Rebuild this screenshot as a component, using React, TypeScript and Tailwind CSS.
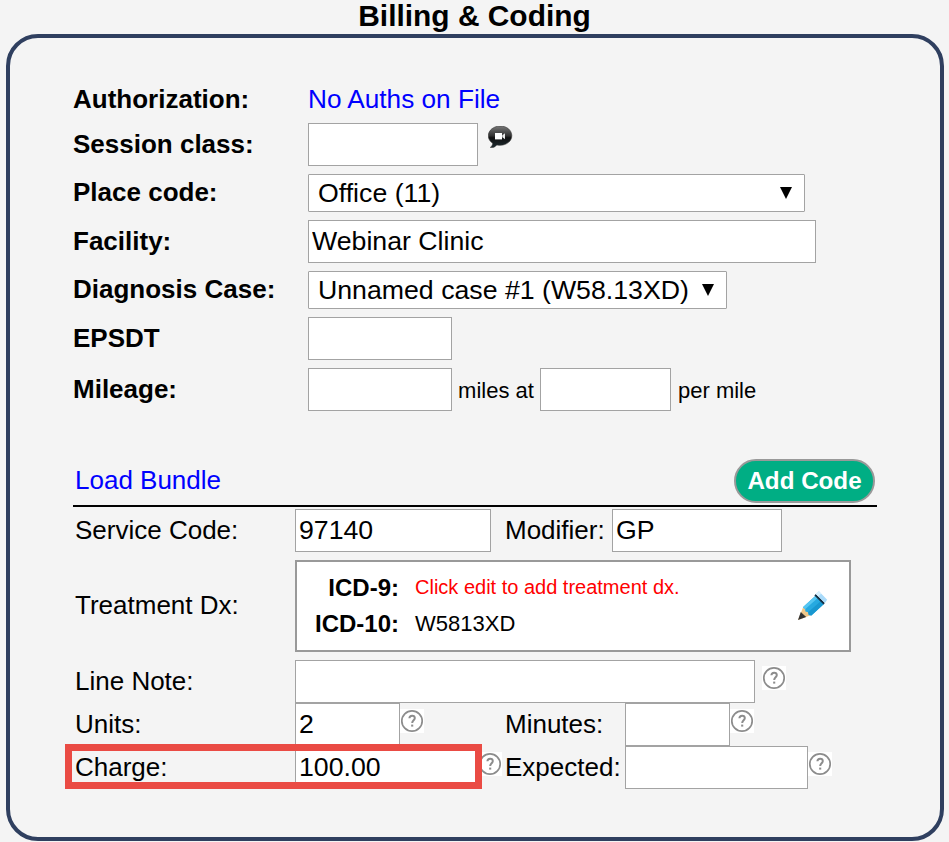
import type { ReactNode } from 'react';

interface FieldProps {
  label: string;
  className?: string;
  children: ReactNode;
}

function Field({ label, className = '', children }: FieldProps) {
  return (
    <div className={`flex items-center ${className}`}>
      <div className="w-[235px] shrink-0 pb-[2px] text-[26px] leading-none font-bold whitespace-nowrap">{label}</div>
      {children}
    </div>
  );
}

function TextBox({ label, value = '', className }: { label: string; value?: string; className: string }) {
  return (
    <input
      type="text"
      aria-label={label}
      defaultValue={value}
      className={`block h-[43px] shrink-0 border border-[#a3a3a3] bg-white px-[3px] pb-px text-[26.7px] leading-none outline-none ${className}`}
    />
  );
}

function SelectBox({ value, className }: { value: string; className: string }) {
  return (
    <button
      type="button"
      className={`flex h-[38px] items-center justify-between rounded-[1px] border border-[#a3a3a3] bg-white pr-3 pl-[9px] text-[26.7px] leading-none whitespace-nowrap ${className}`}
    >
      <span className="pt-px">{value}</span>
      <svg className="mb-px h-3 w-3" viewBox="0 0 12 12">
        <path d="M0 0h12L6 12z" />
      </svg>
    </button>
  );
}

function HelpIcon({ className = '' }: { className?: string }) {
  return (
    <svg className={`h-6 w-6 shrink-0 bg-white ${className}`} viewBox="0 0 24 24" fill="none" stroke="#8c8c8c">
      <circle cx="12" cy="12" r="10.2" strokeWidth="1.7" />
      <path d="M9.4 9.300c.1-1.700 1.200-2.600 2.700-2.600 1.600 0 2.700 1 2.700 2.400 0 2.200-2.600 2.300-2.600 5" strokeWidth="2" />
      <path d="M12.200 15.600v2" strokeWidth="2.100" />
    </svg>
  );
}

function VideoBubble() {
  return (
    <svg className="mb-[15px] ml-[10px] h-[23px] w-[25px]" viewBox="0 0 25 23">
      <defs>
        <linearGradient id="bubble" x1="0" y1="0" x2="0" y2="1">
          <stop offset="0" stopColor="#777" />
          <stop offset="0.450" stopColor="#333" />
          <stop offset="0.550" stopColor="#111" />
          <stop offset="1" stopColor="#1c2a30" />
        </linearGradient>
      </defs>
      <path
        d="M12.300 0C5.800 0 .300 4.300 .300 9.700c0 3.200 1.700 5.900 4.400 7.500-.1 1.700-.8 3-2.400 4.200 3 .4 5-.6 6.500-2.500 1 .3 2.100.4 3.200.4 6.500 0 11.800-4.200 11.800-9.600S18.800 0 12.300 0z"
        fill="url(#bubble)"
        stroke="#333"
        strokeWidth="0.600"
      />
      <path d="M7 7h7v6.400H7z" fill="#fff" />
      <path d="M14.300 9.200l2.700-2v6l-2.700-2z" fill="#e8e8e8" />
    </svg>
  );
}

function PencilIcon() {
  return (
    <svg className="h-[30px] w-[30px]" viewBox="0 0 30 30">
      <path d="M0 29L5.200 16l8 8z" fill="#f0c88a" />
      <path d="M0 29l2.800-8 5.400 4.900z" fill="#333" />
      <path d="M4.900 16.200L17.500 4.800l8.400 8.300-12.500 11.300-2.600-.5-.7-2.600-2.700-.7-.3-2.600z" fill="#26a9e0" />
      <path d="M4.900 16.200L17.500 4.800l2.300 2.300L7.100 18.300z" fill="#55c6f2" />
      <path d="M10.100 21.300L22.900 10.100l3 3-12.500 11.300-2.600-.5z" fill="#1897d0" />
      <path d="M16.400 4.400l1.500-1.400 9 9-1.400 1.500z" fill="#163044" />
      <path d="M17.900 3L20.900.300l8.300 8.400-2.300 3.300z" fill="#a9dbfb" />
      <path d="M17.900 3L20.900.300l2.300 2.300-2.800 2.900z" fill="#d9f0fd" />
    </svg>
  );
}

export default function App() {
  return (
    <div className="h-[842px] w-[949px] overflow-hidden bg-[#f4f4f4] font-['Liberation_Sans',Arial,sans-serif] text-black">
      <h1 className="h-[34px] pt-[2px] text-center text-[29.9px] leading-[28px] font-bold">Billing &amp; Coding</h1>

      <div className="ml-[6px] h-[807px] w-[938px] rounded-[32px] border-4 border-[#2f3f5f] pt-9 pl-[63px]">
        <Field label="Authorization:" className="h-[49px] pt-[2px]">
          <a href="#" className="pb-px text-[26.2px] leading-none text-[#0000ff]">No Auths on File</a>
        </Field>

        <div className="flex flex-col gap-2">
          <Field label="Session class:" className="h-[43px]">
            <TextBox label="Session class" className="w-[170px]" />
            <VideoBubble />
          </Field>
          <Field label="Place code:">
            <SelectBox value="Office (11)" className="w-[497px]" />
          </Field>
          <Field label="Facility:">
            <TextBox label="Facility" value="Webinar Clinic" className="w-[508px]" />
          </Field>
          <Field label="Diagnosis Case:">
            <SelectBox value="Unnamed case #1 (W58.13XD)" className="w-[419px]" />
          </Field>
          <Field label="EPSDT">
            <TextBox label="EPSDT" className="w-[144px]" />
          </Field>
          <Field label="Mileage:">
            <TextBox label="Miles" className="w-[144px]" />
            <span className="w-[88px] pt-[2px] text-center text-[22px] leading-none">miles at</span>
            <TextBox label="Rate" className="w-[131px]" />
            <span className="ml-[7px] pt-[2px] text-[22px] leading-none">per mile</span>
          </Field>
        </div>

        <div className="mt-12 flex h-12 w-[804px] items-start justify-between border-b-2 border-black pr-[2px] pl-[2px]">
          <a href="#" className="pt-2 text-[26px] leading-none text-[#0000ff]">Load Bundle</a>
          <button
            type="button"
            className="h-11 w-[141px] rounded-full border-2 border-[#999] bg-[#00ae84] text-[24.2px] leading-none font-bold whitespace-nowrap text-white"
          >
            Add Code
          </button>
        </div>

        <div className="mt-[2px] flex h-[43px] items-center pl-[2px] text-[26px] leading-none">
          <span className="w-[220px] pb-px">Service Code:</span>
          <TextBox label="Service code" value="97140" className="w-[196px]" />
          <span className="w-[121px] pb-px pl-[14px]">Modifier:</span>
          <TextBox label="Modifier" value="GP" className="w-[170px]" />
        </div>

        <div className="mt-2 flex h-[92px] items-center pl-[2px] text-[26px] leading-none">
          <span className="w-[220px] pb-[2px]">Treatment Dx:</span>
          <div className="flex h-full w-[556px] items-center justify-between border-2 border-[#999] bg-white pr-[21px]">
            <dl className="grid grid-cols-[102px_auto] gap-x-4 leading-9">
              <dt className="text-right text-[24px] font-bold">ICD-9:</dt>
              <dd className="text-[20px] leading-[34px] text-[#ff0000]">Click edit to add treatment dx.</dd>
              <dt className="text-right text-[24px] font-bold">ICD-10:</dt>
              <dd className="text-[22px]">W5813XD</dd>
            </dl>
            <PencilIcon />
          </div>
        </div>

        <div className="mt-2 flex h-[43px] items-center pl-[2px] text-[26px] leading-none">
          <span className="w-[220px] pb-[2px]">Line Note:</span>
          <TextBox label="Line note" className="w-[460px]" />
          <HelpIcon className="mb-[7px] ml-[7px]" />
        </div>

        <div className="flex h-[43px] items-center pl-[2px] text-[26px] leading-none">
          <span className="w-[220px] pb-[2px]">Units:</span>
          <TextBox label="Units" value="2" className="w-[105px]" />
          <HelpIcon className="mb-[7px]" />
          <span className="ml-[81px] w-[120px] pb-[2px]">Minutes:</span>
          <TextBox label="Minutes" className="w-[105px]" />
          <HelpIcon className="mb-[7px]" />
        </div>

        <div className="relative flex h-[43px] items-center pl-[2px] text-[26px] leading-none">
          <span className="w-[220px] pb-[2px]">Charge:</span>
          <TextBox label="Charge" value="100.00" className="w-[183px]" />
          <HelpIcon className="mb-[7px]" />
          <span className="ml-[3px] w-[120px] pb-[2px]">Expected:</span>
          <TextBox label="Expected" className="w-[183px]" />
          <HelpIcon className="mb-[7px]" />
          {/* highlight around the charge row */}
          <div className="pointer-events-none absolute -top-[2px] -left-2 h-[45px] w-[417px] border-[7px] border-[#ea4b44]" />
        </div>
      </div>
    </div>
  );
}
